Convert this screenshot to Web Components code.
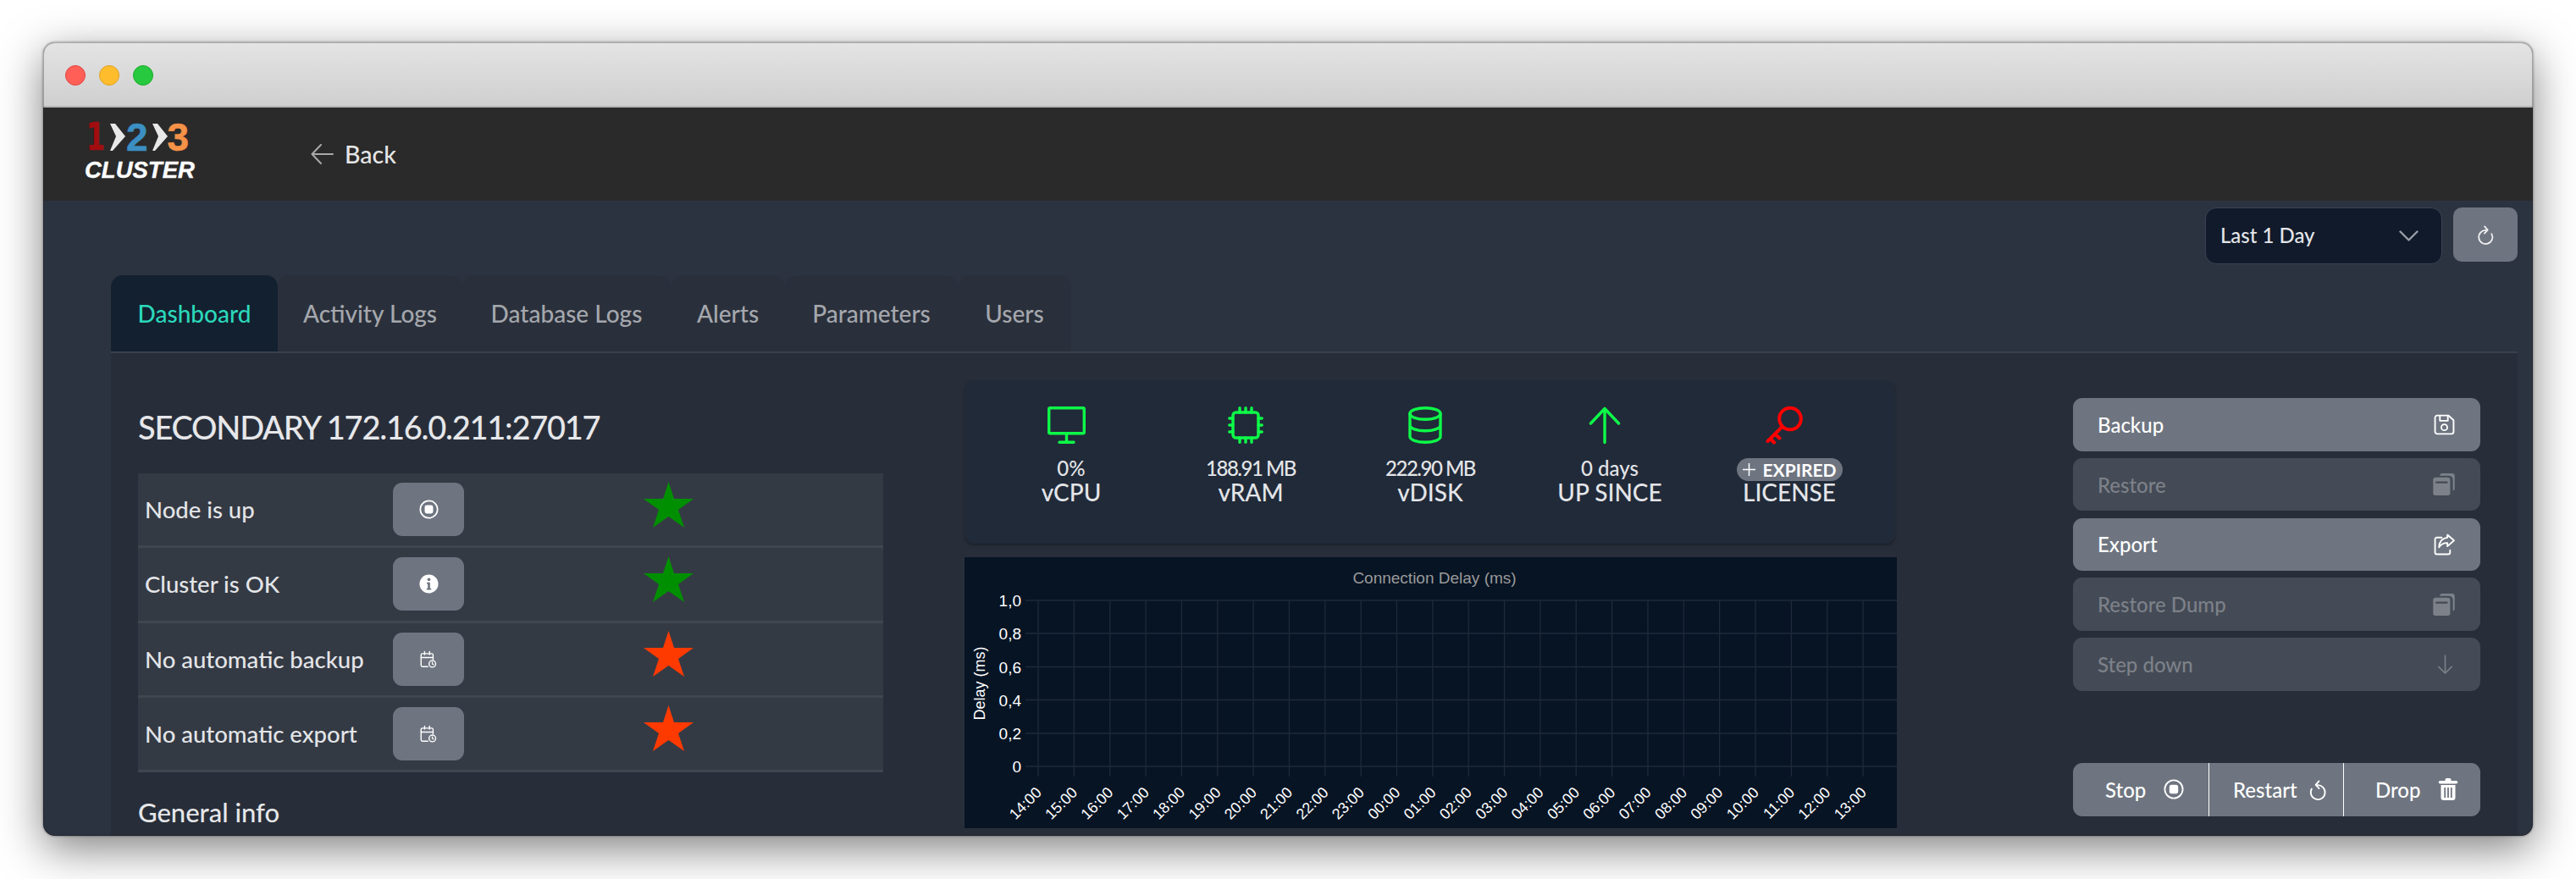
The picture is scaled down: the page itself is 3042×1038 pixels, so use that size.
<!DOCTYPE html>
<html lang="en"><head><meta charset="utf-8"><title>1-2-3 Cluster</title>
<style>
html,body{margin:0;background:#fff;}
body{padding:50px 51px 0;height:1038px;overflow:hidden;box-sizing:border-box;font-family:Lato,"Liberation Sans",sans-serif;}
</style></head><body>
<app-window>
  <app-header></app-header>
  <app-toolbar></app-toolbar>
  <app-tabs></app-tabs>
  <app-panel>
    <div slot="left">
      <node-title>SECONDARY 172.16.0.211:27017</node-title>
      <status-row label="Node is up" icon="stop" color="green"></status-row>
      <status-row label="Cluster is OK" icon="info" color="green"></status-row>
      <status-row label="No automatic backup" icon="cal" color="red"></status-row>
      <status-row label="No automatic export" icon="cal" color="red"></status-row>
      <section-title>General info</section-title>
    </div>
    <div slot="mid">
      <metric-card>
        <metric-item icon="monitor" value="0%" label="vCPU"></metric-item>
        <metric-item icon="chip" value="188.91 MB" label="vRAM" tight></metric-item>
        <metric-item icon="db" value="222.90 MB" label="vDISK" tight></metric-item>
        <metric-item icon="up" value="0 days" label="UP SINCE"></metric-item>
        <metric-item icon="key" label="LICENSE" badge="EXPIRED"></metric-item>
      </metric-card>
      <delay-chart></delay-chart>
    </div>
    <div slot="right">
      <action-list>
        <action-btn label="Backup" icon="save"></action-btn>
        <action-btn label="Restore" icon="stack" disabled></action-btn>
        <action-btn label="Export" icon="share"></action-btn>
        <action-btn label="Restore Dump" icon="stack" disabled></action-btn>
        <action-btn label="Step down" icon="down" disabled></action-btn>
      </action-list>
      <action-group></action-group>
    </div>
  </app-panel>
</app-window>
<script>
const ICONS={
 stop:'<circle cx="12" cy="12" r="10.6" fill="none" stroke="currentColor" stroke-width="1.8"/><rect x="6.8" y="6.8" width="10.4" height="10.4" rx="2.6" fill="currentColor"/>',
 info:'<circle cx="12" cy="12" r="11.5" fill="currentColor"/><circle cx="12" cy="6.6" r="1.9" fill="#6e7580"/><path d="M9.4 10.2h4v7.2h1.4v1.8H9.2v-1.8h1.4v-5.4H9.4z" fill="#6e7580"/>',
 cal:'<g fill="none" stroke="currentColor" stroke-width="1.7" stroke-linecap="round" stroke-linejoin="round"><path d="M11 22.500H3.500a2 2 0 0 1-2-2V6a2 2 0 0 1 2-2h13a2 2 0 0 1 2 2v6"/><path d="M6.500 1v4.500M13.500 1v4.500M1.500 9.500h17"/><circle cx="17.500" cy="18.500" r="4.700"/><path d="M17.500 16.300v2.200l1.400 1"/></g>',
 save:'<g fill="none" stroke="currentColor" stroke-width="1.8" stroke-linejoin="round"><path d="M4 1.500h12.500l6 5.500v13a2.500 2.500 0 0 1-2.500 2.500H4A2.500 2.500 0 0 1 1.500 20V4A2.500 2.500 0 0 1 4 1.500z"/><path d="M7 1.500v6h9v-6"/><circle cx="12" cy="15" r="3.400"/></g>',
 stack:'<path d="M7.500 2.500A2.500 2.500 0 0 1 10 0h11a3 3 0 0 1 3 3v14a2.500 2.500 0 0 1-2 2.400V7a4.500 4.500 0 0 0-4.500-4.500z" fill="currentColor"/><path d="M3 4.500h13A3 3 0 0 1 19 7.500v14.500a2.500 2.500 0 0 1-2.500 2.500H2.500A2.500 2.500 0 0 1 0 22V7.500a3 3 0 0 1 3-3zM2.800 9v2h13.400V9z" fill="currentColor" fill-rule="evenodd"/>',
 share:'<g fill="none" stroke="currentColor" stroke-width="1.8" stroke-linejoin="round" stroke-linecap="round"><path d="M9 4.500H3.500A2 2 0 0 0 1.500 6.500v15a2 2 0 0 0 2 2h13a2 2 0 0 0 2-2V19"/><path d="M15.500 1.500 23 8l-7.500 6.500v-3.800c-4.500 0-7.500 1.300-9.500 5 0-6 3.500-10.500 9.500-11z"/></g>',
 down:'<g fill="none" stroke="currentColor" stroke-width="1.6" stroke-linecap="round" stroke-linejoin="round"><path d="M12 1v22M4 15l8 8 8-8"/></g>',
 undo:'<g fill="none" stroke="currentColor" stroke-width="1.9" stroke-linecap="round" stroke-linejoin="round"><path d="M11 6.500A8.800 8.800 0 1 1 4 11"/><path d="M13 1.500 9 6.200l4.200 4.300"/></g>',
 redo:'<g fill="none" stroke="currentColor" stroke-width="1.900" stroke-linecap="round" stroke-linejoin="round"><path d="M13 6.500A8.800 8.800 0 1 0 20 11"/><path d="M11 1.500l4 4.700-4.200 4.300"/></g>',
 trash:'<path d="M8.500 1.800A1.800 1.800 0 0 1 10.300 0h3.400a1.800 1.800 0 0 1 1.800 1.800V3h6a1.200 1.200 0 0 1 0 3.600H2.500a1.200 1.200 0 0 1 0-3.600h6zM3.500 8h17v15a3 3 0 0 1-3 3h-11a3 3 0 0 1-3-3zm3.800 3v12h1.800V11zm3.800 0v12h1.800V11zm3.800 0v12h1.800V11z" fill="currentColor" fill-rule="evenodd"/>',
 monitor:'<g fill="none" stroke="currentColor" stroke-width="3.400" stroke-linecap="round" stroke-linejoin="round"><rect x="1.700" y="1.700" width="41.600" height="30" rx="1.500"/><path d="M22.500 32v10M14 42.300h17"/></g>',
 chip:'<g fill="none" stroke="currentColor" stroke-width="3.400" stroke-linecap="round" stroke-linejoin="round"><rect x="6" y="7" width="30" height="30" rx="3.500"/><path d="M14 1.800V7M21 1.800V7M28 1.800V7M14 37v5.200M21 37v5.200M28 37v5.200M1.800 14H6M1.800 22H6M1.800 30H6M36 14h4.200M36 22h4.200M36 30h4.200"/></g>',
 db:'<g fill="none" stroke="currentColor" stroke-width="3.400" stroke-linecap="round" stroke-linejoin="round"><ellipse cx="20" cy="8.500" rx="18" ry="6.800"/><path d="M2 8.500v27c0 3.800 8 6.800 18 6.800s18-3 18-6.800v-27M2 22c0 3.800 8 6.800 18 6.800s18-3 18-6.800"/></g>',
 up:'<g fill="none" stroke="currentColor" stroke-width="3.400" stroke-linecap="round" stroke-linejoin="round"><path d="M19 2.500v40M2.500 20 19 2.500 35.500 20"/></g>',
 key:'<g fill="none" stroke="currentColor" stroke-width="4" stroke-linecap="round" stroke-linejoin="round"><circle cx="28" cy="14.500" r="12.800"/><path d="M18.500 24 1.500 41M10 32.500l5.500 5M4.500 38l4.500 4.500"/></g>'
};
function icon(n,w,h,vb){return `<svg width="${w}" height="${h}" viewBox="${vb||'0 0 24 24'}" aria-hidden="true" style="display:block;overflow:visible">${ICONS[n]}</svg>`;}
function def(name,css,html){
  customElements.define(name,class extends HTMLElement{
    connectedCallback(){
      if(this.shadowRoot)return;
      const r=this.attachShadow({mode:'open'});
      r.innerHTML=`<style>${css}</style>`+(typeof html==='function'?html(this):html);
    }
  });
}
def('app-window',`
 :host{display:block;width:2940px;height:937px;border-radius:14px;overflow:hidden;background:#2c3340;box-shadow:0 15px 52px rgba(0,0,0,.5),0 0 3px rgba(0,0,0,.5);outline:1px solid rgba(0,0,0,.25);outline-offset:-1px}
 .bar{height:75px;background:linear-gradient(#e4e4e4,#cfcfcf);border-bottom:2px solid #b5b5b5;display:flex;align-items:center;gap:16px;padding:0 0 0 26px}
 i{width:24px;height:24px;margin-top:3px;border-radius:50%;display:block;box-sizing:border-box}
`,`<div class="bar"><i style="background:#ff5f57;border:1px solid #e0443e"></i><i style="background:#ffbd2e;border:1px solid #dea123"></i><i style="background:#27c93f;border:1px solid #1aab29"></i></div><slot></slot>`);
def('app-logo',`
 :host{display:block;width:130px;color:#fff;font-family:"Liberation Sans",sans-serif;line-height:1}
 .top{display:flex;align-items:center;height:36px;font-weight:700;font-size:46px;-webkit-text-stroke:.6px currentColor}
 .one{font-family:"DejaVu Sans";font-weight:700;font-size:44px;color:#a20d0f;display:block;width:22px;transform:scaleX(.72);transform-origin:0 50%;margin-left:2px;margin-right:6px}
 .two{color:#3b8fc2;margin:0 5px 0 1px}.thr{color:#f59248;margin-left:0}
 .btm{font-style:italic;font-weight:700;font-size:27.500px;margin-top:9px;white-space:nowrap;line-height:24px;-webkit-text-stroke:.4px #fff}
 svg{display:block;flex:none}
`,`<div class="top"><span class="one">1</span><svg width="18" height="32" viewBox="0 0 18 32"><path d="M0 0h6l12 15L3 32H0l7-17z" fill="#e8e8e8"/></svg><span class="two">2</span><svg width="18" height="32" viewBox="0 0 18 32"><path d="M0 0h6l12 15L3 32H0l7-17z" fill="#e8e8e8"/></svg><span class="thr">3</span></div><div class="btm">CLUSTER</div>`);
def('app-header',`
 :host{display:flex;height:110px;background:#2a2a2a;align-items:center;padding-left:49px;color:#e6e6e6;font-family:Lato,sans-serif;font-size:28.500px;font-weight:500}
 .back{display:flex;align-items:center;gap:13px;margin-left:137px;margin-top:-1px}
 app-logo{margin-top:-7px}
`,`<app-logo></app-logo><div class="back"><svg width="27" height="24" viewBox="0 0 27 24" fill="none" stroke="#a8a8a8" stroke-width="2" stroke-linecap="round" stroke-linejoin="round"><path d="M26 12H2M12 1 1.500 12 12 23"/></svg><span>Back</span></div>`);
def('app-toolbar',`
 :host{display:flex;justify-content:flex-end;gap:13px;padding:8px 18px 0 0;height:80px;font-family:Lato,sans-serif}
 .sel{width:280px;height:67px;box-sizing:border-box;background:#111a2b;border:1px solid #3a4252;border-radius:13px;display:flex;align-items:center;justify-content:space-between;padding:0 27px 0 17px;color:#e3e5e8;font-size:24px;font-weight:500}
 .sel span{margin-top:-3px}
 .ref{width:76px;height:64px;background:#6e7580;border-radius:10px;display:flex;align-items:center;justify-content:center;color:#f2f2f2}
`,()=>`<div class="sel"><span>Last 1 Day</span><svg width="23" height="13" viewBox="0 0 23 13" fill="none" stroke="#9a9ea6" stroke-width="2.400" stroke-linecap="round" stroke-linejoin="round"><path d="M1.500 1.500 11.500 11.500 21.500 1.500"/></svg></div><div class="ref">${icon('redo',22,24)}</div>`);
def('app-tabs',`
 :host{display:grid;grid-template-columns:197px 218px 246px 135px 204px 134px;justify-content:start;margin:0 18px 0 80px;height:90px;font-family:Lato,sans-serif;font-size:28px;font-weight:500;color:#a4a7ad}
 div{background:#2a303b;border-radius:14px 14px 0 0;display:flex;align-items:center;justify-content:center;white-space:nowrap}
 .on{background:#13202f;color:#2bd8bb}
`,`<div class="on">Dashboard</div><div>Activity Logs</div><div>Database Logs</div><div>Alerts</div><div>Parameters</div><div>Users</div>`);
def('app-panel',`
 :host{display:grid;grid-template-columns:880px 1195px 691px;margin:0 18px 0 80px;padding:0 0 0 32px;height:580px;background:#282e39;border-top:2px solid #3a414d;font-family:Lato,sans-serif;font-weight:500;color:#e3e5e8;overflow:hidden}
 .l{width:880px;padding-top:64px}
 .m{margin-left:96px;width:1099px;padding-top:32px}
 .r{margin-left:210px;padding-top:53px;width:481px}
`,`<div class="l"><slot name="left"></slot></div><div class="m"><slot name="mid"></slot></div><div class="r"><slot name="right"></slot></div>`);
def('node-title',`:host{display:block;font-size:38px;letter-spacing:-1.250px;line-height:46px;margin-bottom:32px;white-space:nowrap;color:#e6e7ea}`,`<slot></slot>`);
def('section-title',`:host{display:block;font-size:31px;line-height:36px;margin-top:29px;color:#e6e7ea}`,`<slot></slot>`);
def('status-row',`
 :host{display:grid;grid-template-columns:301px 84px 1fr;align-items:center;height:88.250px;box-sizing:border-box;background:#343a44;border-bottom:3px solid #3f4650;font-size:27.500px;color:#e3e5e8}
 .t{padding-left:8px;white-space:nowrap}
 .b{height:63px;background:#6e7580;border-radius:11px;display:flex;align-items:center;justify-content:center;color:#fff}
 .s{display:flex;justify-content:center;padding-right:13px}
`,h=>{const c=h.getAttribute('color')==='green'?'#008f00':'#ff3a00';const ic=h.getAttribute('icon');return `<div class="t">${h.getAttribute('label')}</div><div class="b">${ic==='cal'?icon(ic,20,23):icon(ic,23,23)}</div><div class="s"><svg width="59" height="54" viewBox="0 0 59 54" style="margin-top:-12px"><polygon points="29.500,0 36,20 59,20 41,33 48,54 29.500,41 11,54 18,33 0,20 23,20" fill="${c}"/></svg></div>`;});
def('metric-card',`
 :host{display:grid;grid-template-columns:repeat(5,212px);padding:31px 20px 0;height:193px;box-sizing:border-box;background:#212a39;border-radius:11px;box-shadow:0 2px 3px rgba(0,0,0,.3)}
`,`<slot></slot>`);
def('metric-item',`
 :host{display:flex;flex-direction:column;align-items:center;color:#e3e5e8}
 .i{height:44px;margin-right:12px;color:#0dfb48}
 .v{height:30px;margin-top:14px;line-height:30px;font-size:24px;white-space:nowrap}
 :host([tight]) .v{letter-spacing:-1.500px}
 .l{line-height:30px;font-size:28px;white-space:nowrap;margin-top:-2px}
 .p{display:inline-flex;align-items:center;gap:9px;height:27px;padding:0 11px;margin-top:1px;border-radius:14px;background:#6e7580;color:#fff;font-size:21px;font-weight:700;line-height:27px;box-sizing:border-box;width:125px;justify-content:center}
 .p svg{display:block;flex:none}
`,h=>{const n=h.getAttribute('icon');const sz={monitor:[45,44,'0 0 45 44'],chip:[42,44,'0 0 42 44'],db:[40,44,'0 0 40 44'],up:[38,44,'0 0 38 44'],key:[42,44,'0 0 42 44']}[n];
 const col=n==='key'?'color:#ff0000':'';const b=h.getAttribute('badge');
 return `<div class="i" style="${col}">${icon(n,sz[0],sz[1],sz[2])}</div><div class="v">${b?`<span class="p"><svg width="15" height="15" viewBox="0 0 15 15" stroke="#fff" stroke-width="1.500"><path d="M7.500 0v15M0 7.500h15"/></svg>${b}</span>`:h.getAttribute('value')}</div><div class="l">${h.getAttribute('label')}</div>`;});
def('delay-chart',`:host{display:block;width:1101px;height:320px;margin-top:16px;background:#071424}svg{display:block}text{font-family:"Liberation Sans",sans-serif;font-weight:400}`,()=>{
  let s='';
  const ys=[51,90,129.600,168.600,208,247],lb=['1,0','0,8','0,6','0,4','0,2','0'];
  ys.forEach((y,i)=>{s+=`<line x1="72" x2="1101" y1="${y}" y2="${y}" stroke="#1e2a39" stroke-width="1.500"/><text x="67" y="${y+7}" text-anchor="end" fill="#fff" font-size="19">${lb[i]}</text>`;});
  const hrs=[14,15,16,17,18,19,20,21,22,23,0,1,2,3,4,5,6,7,8,9,10,11,12,13];
  hrs.forEach((h,i)=>{const x=87+i*42.350;s+=`<line x1="${x}" x2="${x}" y1="51" y2="259" stroke="#1e2a39" stroke-width="1.300"/><text transform="rotate(-45 ${x+5} 279)" x="${x+5}" y="279" text-anchor="end" fill="#fff" font-size="18">${String(h).padStart(2,'0')}:00</text>`;});
  s+=`<text x="555" y="31" text-anchor="middle" fill="#9a9a9a" font-size="19">Connection Delay (ms)</text>`;
  s+=`<text transform="rotate(-90 24 149)" x="24" y="149" text-anchor="middle" fill="#fff" font-size="18">Delay (ms)</text>`;
  return `<svg width="1101" height="320" viewBox="0 0 1101 320">${s}</svg>`;});
def('action-list',`:host{display:flex;flex-direction:column;gap:8.200px}`,`<slot></slot>`);
def('action-btn',`
 :host{display:flex;align-items:center;justify-content:space-between;height:62.600px;padding:0 30px 0 29px;box-sizing:border-box;background:#6e7580;border-radius:11px;color:#fff;font-size:24px}
 :host([disabled]){background:#444b56;color:#7d8189}
`,h=>{const n=h.getAttribute('icon');const s=n==='down'?[23,25]:n==='stack'?[26,26,'0 0 24 24.500']:[25,25];return `<span>${h.getAttribute('label')}</span>${icon(n,s[0],s[1],s[2])}`;});
def('action-group',`
 :host{display:grid;grid-template-columns:160px 159px 162px;height:63px;margin-top:85px;background:#6e7580;border-radius:11px;color:#fff;font-size:24px;overflow:hidden}
 div{display:flex;align-items:center;padding-left:38px;gap:21px;box-sizing:border-box}
 div+div{border-left:1px solid #fff;padding-left:28px;gap:13px}
 div:last-child{padding-left:37px;gap:20px}
`,()=>`<div><span>Stop</span>${icon('stop',24,24)}</div><div><span>Restart</span>${icon('undo',23,25)}</div><div><span>Drop</span>${icon('trash',24,27,'0 0 24 27')}</div>`);
</script>
</body></html>
